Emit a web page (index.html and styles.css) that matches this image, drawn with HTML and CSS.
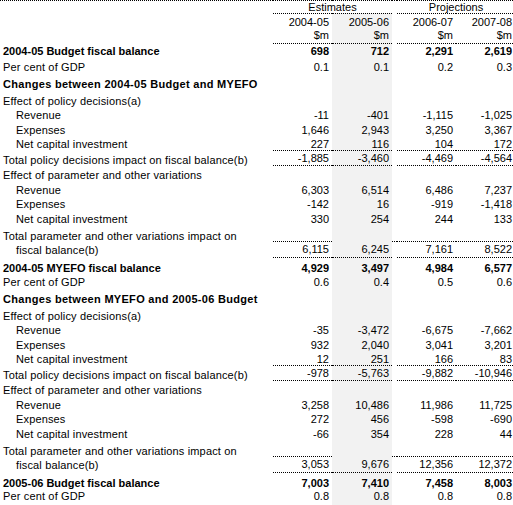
FILE: index.html
```html
<!DOCTYPE html>
<html lang="en">
<head>
    <meta charset="UTF-8">
    <meta name="viewport" content="width=device-width, initial-scale=1.0">
    <title>Fiscal balance reconciliation</title>
    <link rel="stylesheet" href="styles.css">
</head>
<body>

<table class="fiscal">
    <colgroup>
        <col class="c-label">
        <col class="c-num">
        <col class="c-num2">
        <col class="c-gap">
        <col class="c-num">
        <col class="c-num">
    </colgroup>

    <!-- Column headings -->
    <tr class="r-group">
        <td class="lbl"></td>
        <td colspan="2" class="grp">Estimates</td>
        <td></td>
        <td colspan="2" class="grp">Projections</td>
    </tr>
    <tr class="r-head">
        <td class="lbl"></td>
        <td>2004-05</td><td class="sh">2005-06</td><td></td><td>2006-07</td><td>2007-08</td>
    </tr>
    <tr class="r-head units">
        <td class="lbl"></td>
        <td>$m</td><td class="sh">$m</td><td></td><td>$m</td><td>$m</td>
    </tr>

    <tr class="r-first bold">
        <td class="lbl">2004-05 Budget fiscal balance</td>
        <td>698</td><td class="sh">712</td><td></td><td>2,291</td><td>2,619</td>
    </tr>
    <tr class="r-first-pct">
        <td class="lbl">Per cent of GDP</td>
        <td>0.1</td><td class="sh">0.1</td><td></td><td>0.2</td><td>0.3</td>
    </tr>

    <!-- Budget to MYEFO -->
    <tr class="sec bold">
        <td class="lbl wide">Changes between 2004-05 Budget and MYEFO</td>
        <td></td><td class="sh"></td><td></td><td></td><td></td>
    </tr>
    <tr class="lead">
        <td class="lbl">Effect of policy decisions(a)</td>
        <td></td><td class="sh"></td><td></td><td></td><td></td>
    </tr>
    <tr>
        <td class="lbl sub">Revenue</td>
        <td>-11</td><td class="sh">-401</td><td></td><td>-1,115</td><td>-1,025</td>
    </tr>
    <tr>
        <td class="lbl sub">Expenses</td>
        <td>1,646</td><td class="sh">2,943</td><td></td><td>3,250</td><td>3,367</td>
    </tr>
    <tr>
        <td class="lbl sub">Net capital investment</td>
        <td>227</td><td class="sh">116</td><td></td><td>104</td><td>172</td>
    </tr>
    <tr class="total">
        <td class="lbl">Total policy decisions impact on fiscal balance(b)</td>
        <td>-1,885</td><td class="sh">-3,460</td><td></td><td>-4,469</td><td>-4,564</td>
    </tr>
    <tr class="lead param">
        <td class="lbl">Effect of parameter and other variations</td>
        <td></td><td class="sh"></td><td></td><td></td><td></td>
    </tr>
    <tr>
        <td class="lbl sub">Revenue</td>
        <td>6,303</td><td class="sh">6,514</td><td></td><td>6,486</td><td>7,237</td>
    </tr>
    <tr>
        <td class="lbl sub">Expenses</td>
        <td>-142</td><td class="sh">16</td><td></td><td>-919</td><td>-1,418</td>
    </tr>
    <tr>
        <td class="lbl sub">Net capital investment</td>
        <td>330</td><td class="sh">254</td><td></td><td>244</td><td>133</td>
    </tr>
    <tr class="split-top">
        <td class="lbl two" rowspan="2">Total parameter and other variations impact on<br><span class="sub-line">fiscal balance(b)</span></td>
        <td></td><td class="sh"></td><td></td><td></td><td></td>
    </tr>
    <tr class="split-bottom">
        <td>6,115</td><td class="sh">6,245</td><td></td><td>7,161</td><td>8,522</td>
    </tr>
    <tr class="lead bold">
        <td class="lbl">2004-05 MYEFO fiscal balance</td>
        <td>4,929</td><td class="sh">3,497</td><td></td><td>4,984</td><td>6,577</td>
    </tr>
    <tr class="pct">
        <td class="lbl">Per cent of GDP</td>
        <td>0.6</td><td class="sh">0.4</td><td></td><td>0.5</td><td>0.6</td>
    </tr>

    <!-- MYEFO to 2005-06 Budget -->
    <tr class="sec bold">
        <td class="lbl wide">Changes between MYEFO and 2005-06 Budget</td>
        <td></td><td class="sh"></td><td></td><td></td><td></td>
    </tr>
    <tr class="lead">
        <td class="lbl">Effect of policy decisions(a)</td>
        <td></td><td class="sh"></td><td></td><td></td><td></td>
    </tr>
    <tr>
        <td class="lbl sub">Revenue</td>
        <td>-35</td><td class="sh">-3,472</td><td></td><td>-6,675</td><td>-7,662</td>
    </tr>
    <tr>
        <td class="lbl sub">Expenses</td>
        <td>932</td><td class="sh">2,040</td><td></td><td>3,041</td><td>3,201</td>
    </tr>
    <tr>
        <td class="lbl sub">Net capital investment</td>
        <td>12</td><td class="sh">251</td><td></td><td>166</td><td>83</td>
    </tr>
    <tr class="total">
        <td class="lbl">Total policy decisions impact on fiscal balance(b)</td>
        <td>-978</td><td class="sh">-5,763</td><td></td><td>-9,882</td><td>-10,946</td>
    </tr>
    <tr class="lead param">
        <td class="lbl">Effect of parameter and other variations</td>
        <td></td><td class="sh"></td><td></td><td></td><td></td>
    </tr>
    <tr>
        <td class="lbl sub">Revenue</td>
        <td>3,258</td><td class="sh">10,486</td><td></td><td>11,986</td><td>11,725</td>
    </tr>
    <tr>
        <td class="lbl sub">Expenses</td>
        <td>272</td><td class="sh">456</td><td></td><td>-598</td><td>-690</td>
    </tr>
    <tr>
        <td class="lbl sub">Net capital investment</td>
        <td>-66</td><td class="sh">354</td><td></td><td>228</td><td>44</td>
    </tr>
    <tr class="split-top">
        <td class="lbl two" rowspan="2">Total parameter and other variations impact on<br><span class="sub-line">fiscal balance(b)</span></td>
        <td></td><td class="sh"></td><td></td><td></td><td></td>
    </tr>
    <tr class="split-bottom">
        <td>3,053</td><td class="sh">9,676</td><td></td><td>12,356</td><td>12,372</td>
    </tr>
    <tr class="lead bold">
        <td class="lbl">2005-06 Budget fiscal balance</td>
        <td>7,003</td><td class="sh">7,410</td><td></td><td>7,458</td><td>8,003</td>
    </tr>
    <tr class="pct last">
        <td class="lbl">Per cent of GDP</td>
        <td>0.8</td><td class="sh">0.8</td><td></td><td>0.8</td><td>0.8</td>
    </tr>
</table>

</body>
</html>
```

FILE: styles.css
```css
/* General */
body {
    margin: 0;
    background: #ffffff;
    font-family: "Liberation Sans", Arial, sans-serif;
    font-size: 11px;
    color: #000000;
}

/* Table */
.fiscal {
    width: 513px;
    table-layout: fixed;
    border-collapse: collapse;
    border-top: 1px dotted #000;
    border-bottom: 1px dotted #000;
}
.c-label { width: 273px; }
.c-num { width: 59px; }
.c-num2 { width: 60px; }
.c-gap { width: 5px; }

.fiscal tr {
    height: 14.5px;
}
.fiscal td {
    padding: 0 3px 0 3px;
    line-height: 11px;
    vertical-align: bottom;
    text-align: right;
    white-space: nowrap;
}
.fiscal .lbl {
    text-align: left;
    letter-spacing: 0.15px;
}
.fiscal .sub {
    padding-left: 16px;
}
.sub-line {
    display: inline-block;
    padding-left: 13px;
}
.fiscal .sh {
    background: #f2f2f2; /* shaded 2005-06 column */
}

/* Header rows */
.fiscal .r-group {
    height: 12.5px;
}
.fiscal .grp {
    text-align: center;
    border-bottom: 1px dotted #000;
}
.fiscal .r-head {
    height: 15px;
}
.units td {
    padding-bottom: 2px;
}
.units td:not(.lbl):not(:nth-child(4)) {
    border-bottom: 1px dotted #000;
}
.fiscal .r-first {
    height: 14px;
}
.fiscal .r-first-pct {
    height: 15.5px;
}

/* Body rows */
.bold td {
    font-weight: bold;
}
.fiscal .bold .lbl {
    letter-spacing: 0;
}
.fiscal .bold .wide {
    letter-spacing: 0.3px;
}
.fiscal .sec {
    height: 17.5px;
}
.fiscal .lead {
    height: 16.5px;
}
.fiscal .param {
    height: 15.5px;
}
.fiscal .pct {
    height: 14px;
}
.fiscal .total {
    height: 15.5px;
}
.total td:not(.lbl) {
    padding-bottom: 1.5px;
}
.total td:not(.lbl):not(:nth-child(4)) {
    border-top: 1px dotted #000;
    border-bottom: 1px dotted #000;
}
.fiscal .split-top {
    height: 16.5px;
}
.split-top td:not(.lbl):not(:nth-child(3)) {
    border-bottom: 1px dotted #000;
}
.fiscal .split-bottom {
    height: 16px;
}
.split-bottom td {
    padding-bottom: 2px;
}
.split-bottom td:not(:nth-child(3)) {
    border-bottom: 1px dotted #000;
}
.fiscal .two {
    line-height: 14px;
}
.fiscal .last {
    height: 17px;
}
.last td {
    padding-bottom: 3px;
}
```
